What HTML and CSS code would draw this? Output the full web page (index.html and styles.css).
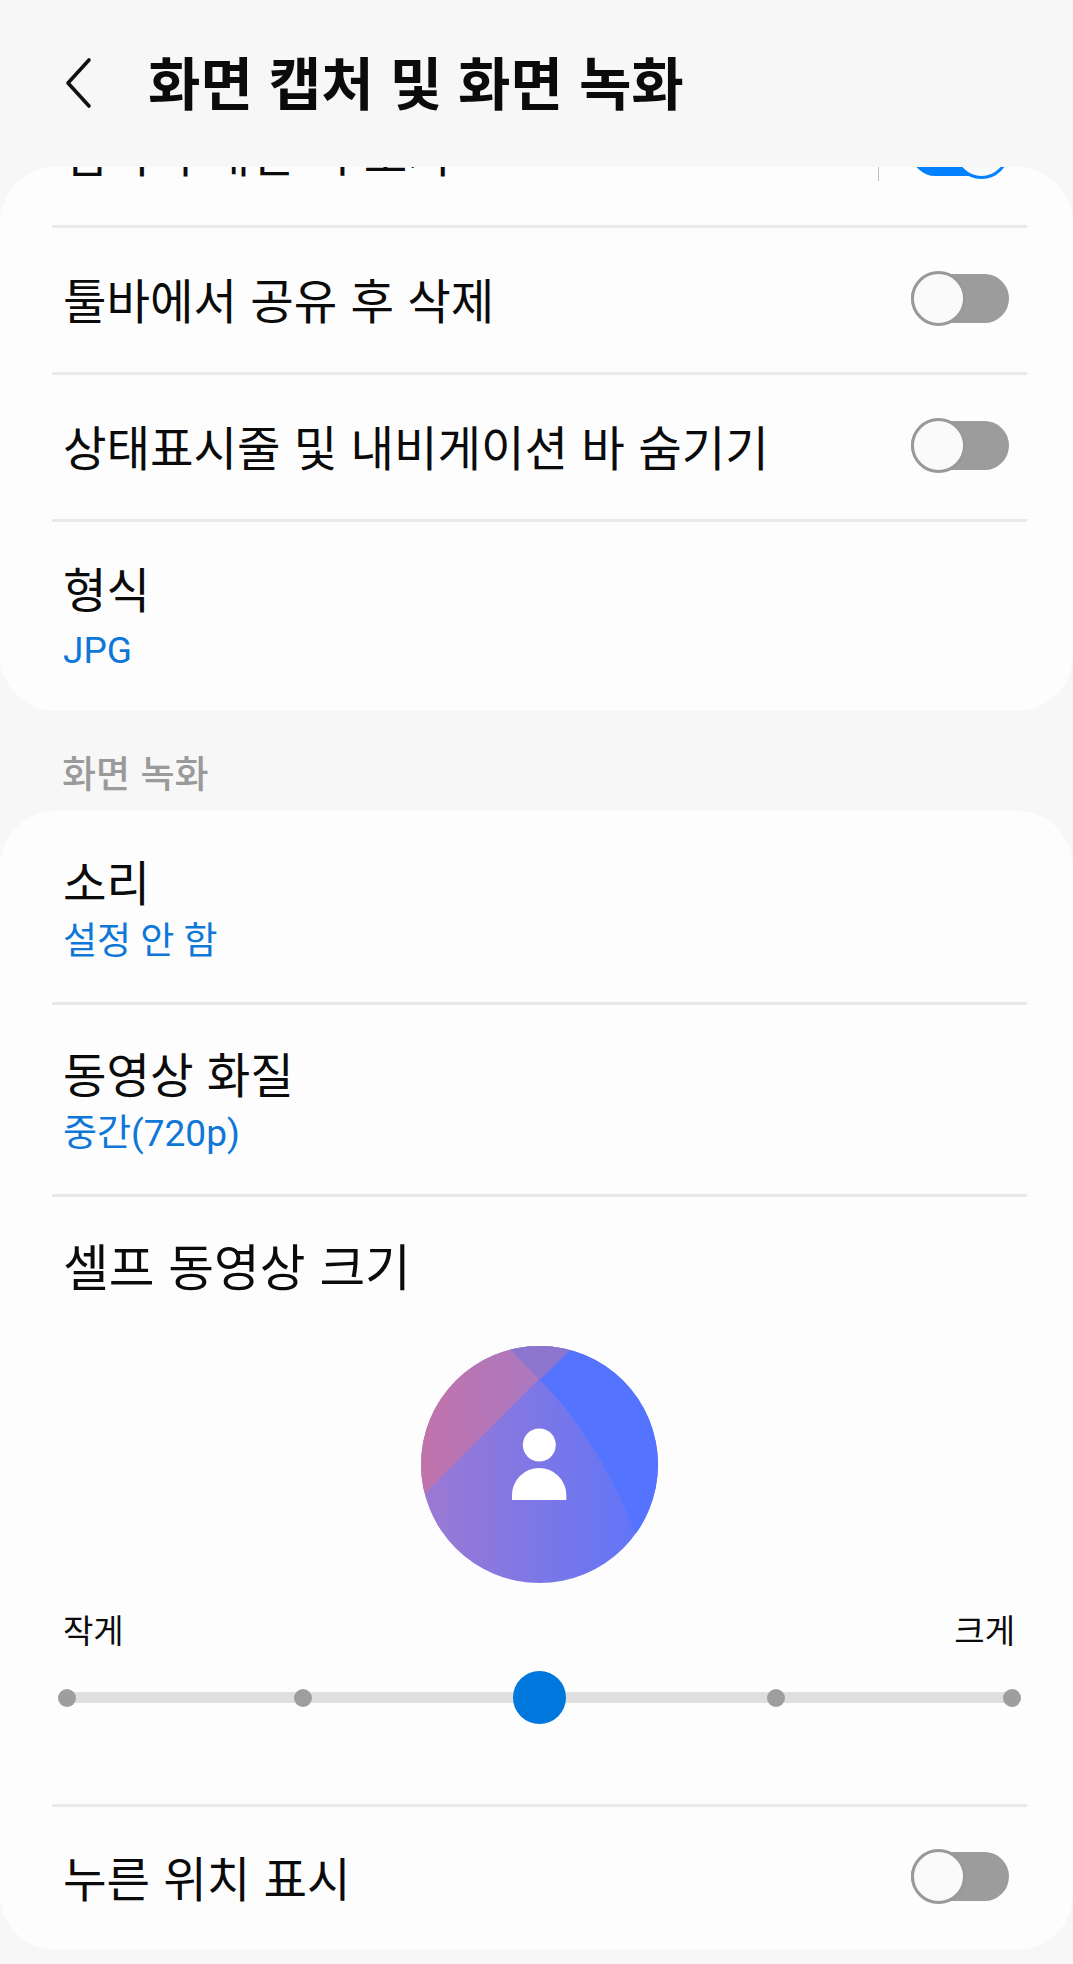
FILE: index.html
```html
<!DOCTYPE html>
<html lang="ko">
<head>
    <meta charset="UTF-8">
    <meta name="viewport" content="width=device-width, initial-scale=1.0">
    <title>화면 캡처 및 화면 녹화</title>
    <link rel="stylesheet" href="styles.css">
</head>
<body>
    <header class="topbar">
        <svg class="back" viewBox="0 0 30 52" width="30" height="52">
            <path d="M25 3 L4 26 L25 49" fill="none" stroke="#111" stroke-width="3.6" stroke-linecap="round" stroke-linejoin="round"/>
        </svg>
        <h1>화면 캡처 및 화면 녹화</h1>
    </header>

    <section class="card card-top">
        <div class="row row-scrolled">
            <span class="label">앱미리 내면 시 보기</span>
            <span class="vline"></span>
            <span class="toggle on"></span>
        </div>
        <div class="row">
            <span class="label">툴바에서 공유 후 삭제</span>
            <span class="toggle"></span>
        </div>
        <div class="row">
            <span class="label">상태표시줄 및 내비게이션 바 숨기기</span>
            <span class="toggle"></span>
        </div>
        <div class="row row-sub row-format">
            <div>
                <div class="label">형식</div>
                <div class="value">JPG</div>
            </div>
        </div>
    </section>

    <h2 class="section-title">화면 녹화</h2>

    <section class="card card-bottom">
        <div class="row row-sub row-sound">
            <div>
                <div class="label">소리</div>
                <div class="value">설정 안 함</div>
            </div>
        </div>
        <div class="row row-sub row-quality">
            <div>
                <div class="label">동영상 화질</div>
                <div class="value">중간(720p)</div>
            </div>
        </div>
        <div class="row selfie">
            <div class="label">셀프 동영상 크기</div>
            <svg class="preview" viewBox="0 0 237 237" width="237" height="237">
                <defs>
                    <clipPath id="disc"><circle cx="118.5" cy="118.5" r="118.5"/></clipPath>
                    <linearGradient id="mainGrad" x1="0" x2="1" y1="0" y2="0">
                        <stop offset="0" stop-color="#9d79d2"/>
                        <stop offset="1" stop-color="#5b75fb"/>
                    </linearGradient>
                    <linearGradient id="pinkGrad" x1="0" x2="1" y1="0" y2="0">
                        <stop offset="0" stop-color="#c173ab"/>
                        <stop offset="1" stop-color="#a67ac6"/>
                    </linearGradient>
                </defs>
                <g clip-path="url(#disc)">
                    <rect width="237" height="237" fill="url(#mainGrad)"/>
                    <path d="M0 151 L151 0 L0 0 Z" fill="url(#pinkGrad)"/>
                    <path d="M86 0 L119 34 L153 0 Z" fill="#8b75cf"/>
                    <path d="M119 34 L153 0 L237 0 L237 237 L213 183 Q175 90 119 34 Z" fill="#5473ff"/>
                </g>
                <circle cx="118.3" cy="99" r="16.5" fill="#fff"/>
                <path d="M91 154 V149 a27.15 27 0 0 1 54.3 0 V154 Z" fill="#fff"/>
            </svg>
            <div class="slider-labels">
                <span>작게</span>
                <span>크게</span>
            </div>
            <div class="slider">
                <span class="stop"></span>
                <span class="stop"></span>
                <span class="stop current"></span>
                <span class="stop"></span>
                <span class="stop"></span>
            </div>
        </div>
        <div class="row row-last">
            <span class="label">누른 위치 표시</span>
            <span class="toggle"></span>
        </div>
    </section>
</body>
</html>
```

FILE: styles.css
```css
* {
    box-sizing: border-box;
}
html, body {
    margin: 0;
    padding: 0;
}
body {
    width: 1073px;
    height: 1964px;
    overflow: hidden;
    background-color: #f7f7f7;
    color: #0b0b0b;
    font-family: "Noto Sans CJK KR", "Noto Sans", sans-serif;
}
.topbar {
    height: 167px;
    display: flex;
    align-items: center;
    padding: 0 0 0 64px;
}
.back {
    margin-top: -2px;
}
.topbar h1 {
    margin: -6px 0 0 54px;
    font-size: 57px;
    font-weight: 700;
    line-height: 1;
}
.card {
    background-color: #fdfdfd;
    border-radius: 56px;
    overflow: hidden;
    padding: 0 46px 0 52px;
}
.card-top {
    height: 544px;
}
.card-bottom {
    height: 1139px;
}
.row {
    display: flex;
    align-items: center;
    justify-content: space-between;
    height: 147px;
    padding: 0 18px 3px 11px;
    border-bottom: 3px solid #e9e9e9;
}
.row:last-child {
    border-bottom: none;
}
.row-scrolled {
    margin-top: -86px;
}
.row-last {
    padding-bottom: 8px;
}
.vline {
    width: 1px;
    height: 58px;
    margin-left: auto;
    margin-right: 32px;
    background-color: #bdbdbd;
}
.label {
    font-size: 47.3px;
    line-height: 62px;
}
.value {
    font-family: Roboto, "Noto Sans CJK KR", sans-serif;
    font-size: 37px;
    line-height: 44px;
    color: #0e77d8;
}
.row-sub {
    padding-bottom: 0;
}
.row-sub .label {
    margin-bottom: 8px;
}
.row-format {
    height: 191px;
    padding-bottom: 5px;
}
.row-format .label {
    margin-bottom: 10px;
}
.row-sound {
    height: 194px;
}
.row-quality {
    height: 192px;
    padding-bottom: 1px;
}
.toggle {
    position: relative;
    display: block;
    width: 98px;
    height: 49px;
    border-radius: 25px;
    background-color: #9c9c9c;
}
.toggle::after {
    content: "";
    box-sizing: border-box;
    position: absolute;
    left: 0;
    top: -3px;
    width: 55px;
    height: 55px;
    border-radius: 50%;
    border: 3px solid #999;
    background-color: #fafafa;
}
.toggle.on {
    background-color: #0381fe;
}
.toggle.on::after {
    left: auto;
    right: 0;
    border-color: #0381fe;
}
.section-title {
    margin: 0;
    height: 100px;
    padding: 37px 0 0 62px;
    font-size: 37px;
    font-weight: 500;
    line-height: 48px;
    color: #9a9a9a;
}
.selfie {
    display: block;
    height: 610px;
    padding: 35px 0 0;
}
.selfie .label {
    padding-left: 11px;
    font-size: 49.7px;
    line-height: 64px;
}
.preview {
    display: block;
    margin: 50px auto 0;
}
.slider-labels {
    display: flex;
    justify-content: space-between;
    margin-top: 24px;
    padding: 0 12px 0 11px;
    font-size: 33px;
    line-height: 44px;
}
.slider {
    position: relative;
    display: flex;
    justify-content: space-between;
    align-items: center;
    height: 53px;
    margin: 20px 6px 0;
}
.slider::before {
    content: "";
    position: absolute;
    left: 4px;
    right: 4px;
    top: 21px;
    height: 11px;
    background-color: #dfdfdf;
}
.stop {
    position: relative;
    width: 18px;
    height: 18px;
    border-radius: 50%;
    background-color: #9e9e9e;
}
.stop.current {
    background-color: #0077dd;
}
.stop.current::after {
    content: "";
    position: absolute;
    left: -17.5px;
    top: -17.5px;
    width: 53px;
    height: 53px;
    border-radius: 50%;
    background-color: #0077dd;
}
```
